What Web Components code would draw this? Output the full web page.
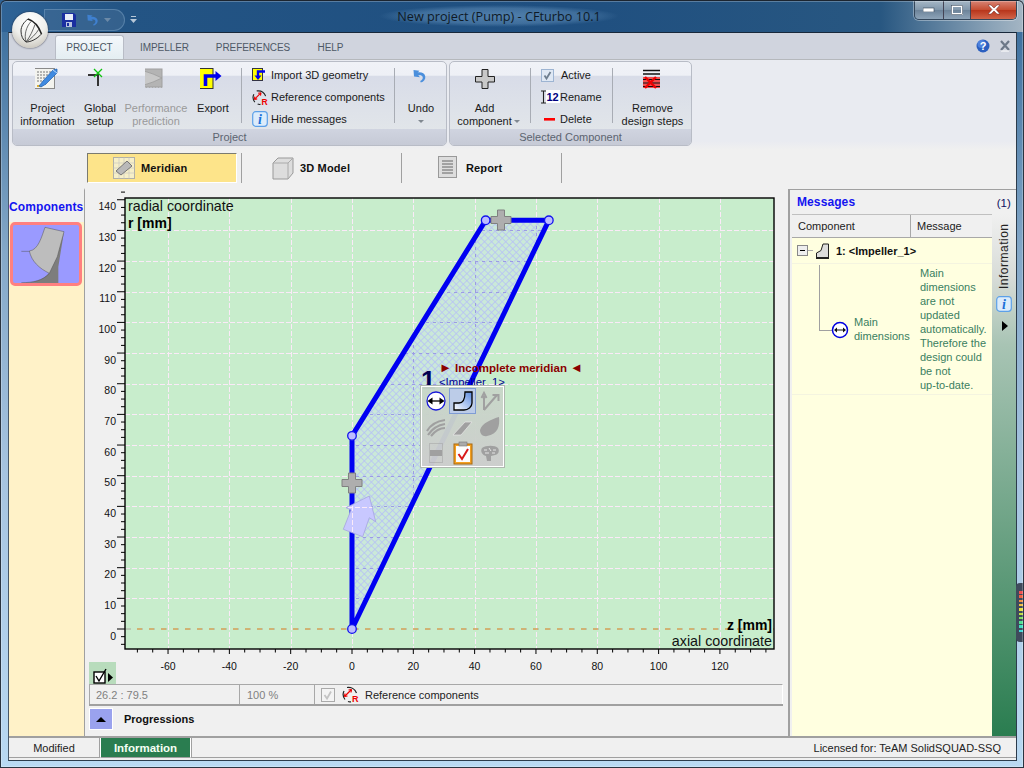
<!DOCTYPE html>
<html lang="en"><head><meta charset="utf-8"><title>CFturbo</title>
<style>
html,body{margin:0;padding:0;width:1024px;height:768px;overflow:hidden;background:#1f4f80;font:11px "Liberation Sans",Arial,sans-serif;color:#111}
</style></head><body>
<cf-app>
  <cf-titlebar slot="title" caption="New project (Pump) - CFturbo 10.1"></cf-titlebar>
  <cf-tabs slot="tabs"></cf-tabs>
  <cf-ribbon slot="ribbon">
    <cf-group label="Project" w="435">
      <cf-big w="69" icon="projinfo">Project<br>information</cf-big>
      <cf-big w="36" icon="globalsetup">Global<br>setup</cf-big>
      <cf-big w="76" icon="perf" disabled>Performance<br>prediction</cf-big>
      <cf-big w="38" icon="export">Export</cf-big>
      <cf-sep m="9"></cf-sep>
      <cf-smallcol w="132" m="10">
        <cf-small icon="import3d" gap="3">Import 3D geometry</cf-small>
        <cf-small icon="refcomp" gap="3">Reference components</cf-small>
        <cf-small icon="info" gap="3">Hide messages</cf-small>
      </cf-smallcol>
      <cf-sep m="10"></cf-sep>
      <cf-big w="52" icon="undo" caret="below">Undo</cf-big>
    </cf-group>
    <cf-group label="Selected Component" w="243">
      <cf-big w="69" icon="add" caret="inline">Add<br>component</cf-big>
      <cf-sep m="11"></cf-sep>
      <cf-smallcol w="60" m="10">
        <cf-small icon="active" gap="4">Active</cf-small>
        <cf-small icon="rename" gap="0" iconw="19">Rename</cf-small>
        <cf-small icon="del" gap="0" iconw="19">Delete</cf-small>
      </cf-smallcol>
      <cf-sep m="11"></cf-sep>
      <cf-big w="79" icon="remove">Remove<br>design steps</cf-big>
    </cf-group>
  </cf-ribbon>
  <cf-viewtabs slot="views">
    <cf-viewtab icon="vmeridian" pad="25" gap="6" active>Meridian</cf-viewtab>
    <cf-viewtab icon="vcube" pad="30" gap="6">3D Model</cf-viewtab>
    <cf-viewtab icon="vreport" pad="36" gap="8">Report</cf-viewtab>
  </cf-viewtabs>
  <cf-components slot="left"></cf-components>
  <cf-center slot="center">
    <cf-chart></cf-chart>
    <cf-infobar></cf-infobar>
    <cf-progress></cf-progress>
  </cf-center>
  <cf-messages slot="right"></cf-messages>
  <cf-status slot="status"></cf-status>
</cf-app>
<script>
const ICONS={
projinfo:`<svg width="26" height="24" viewBox="2 0 26 24"><rect x="1.500" y="1.500" width="20" height="20" fill="#f3f3ee" stroke="#8a8a8a"/><g stroke="#777" stroke-width="1" stroke-dasharray="2 1"><path d="M4 5h14M4 8h13M4 11h10M4 14h7M9 17h4"/></g><path d="M4 18h5v2H4z" fill="#e0b030"/><path d="M6 19 L10 14 L20 3 L24 2 L24 6 L13 17 L8 20z" fill="#3f8ae0" stroke="#1d5fb0" stroke-width=".7"/><path d="M20 3l4 3" stroke="#bcd8f8"/></svg>`,
globalsetup:`<svg width="24" height="22" viewBox="4 0 24 22"><path d="M2 8h12v11" fill="none" stroke="#333" stroke-width="2"/><path d="M10 2l8 8M18 2l-8 8" stroke="#0fc40f" stroke-width="1.300"/></svg>`,
perf:`<svg width="22" height="22" viewBox="3 0 22 22"><rect x="2" y="2" width="18" height="18" fill="#b4b4b4" stroke="#a0a0a0"/><path d="M2 4l9 3 9 4-9 4-9 3z" fill="#c8c8c8" stroke="#9a9a9a" stroke-width=".7"/><path d="M1 20.500h20" stroke="#aaa" stroke-dasharray="1 2"/><path d="M.5 2v18" stroke="#aaa" stroke-dasharray="1 2"/></svg>`,
export:`<svg width="26" height="23" viewBox="2.500 0 26 23"><rect x="1.500" y="1.500" width="14" height="20" fill="#ffff00" stroke="#333"/><path d="M8 19V9h11" fill="none" stroke="#0000ee" stroke-width="3.600"/><path d="M18 4l6 5-6 5z" fill="#0000ee"/></svg>`,
import3d:`<svg width="14" height="14" viewBox="0 0 14 14"><rect x=".5" y=".5" width="10" height="12" fill="#ffff00" stroke="#334"/><path d="M13 3.500H6V8" fill="none" stroke="#00e" stroke-width="2.400"/><path d="M2.500 7.500h7L6 12z" fill="#00e"/></svg>`,
refcomp:`<svg width="17" height="17" viewBox="0 0 17 17"><path d="M5 1.500C9 1 13 3 14.500 7M2 5C.5 8 1 11 3 13.500M6 15.500c1 .5 2 .5 3 .3" fill="none" stroke="#222" stroke-width="1.200"/><path d="M2.500 10.500L9.500 3.500" stroke="#e00" stroke-width="1.200"/><path d="M9.500 3.500l-3 .5M9.500 3.500l-.5 3M2.500 10.500l.5-3M2.500 10.500l3-.5" stroke="#e00" stroke-width="1.200"/><text x="10" y="16" font-family="Liberation Sans" font-size="9" font-weight="700" fill="#e00">R</text></svg>`,
info:`<svg width="16" height="16" viewBox="0 0 16 16"><rect x=".7" y=".7" width="14.600" height="14.600" rx="3" fill="#dcecfb" stroke="#5ca0e8" stroke-width="1.200"/><text x="8" y="13" text-anchor="middle" font-family="Liberation Serif" font-style="italic" font-weight="700" font-size="14" fill="#1a6fd8">i</text></svg>`,
undo:`<svg width="16" height="16" viewBox="1 -1 16 16"><path d="M1.500 2l6 .8-1.800 1.600c3.500-.6 7 .6 7.600 4 .4 3-1.500 5.200-4.500 6.100l-.6-1.400c2-.8 2.900-2.300 2.500-4-.4-1.600-2.400-2-4.400-1.600L8 9.200 2 8.500z" fill="#4b8fdc"/></svg>`,
add:`<svg width="22" height="22" viewBox="0 -1 22 22"><path d="M8 1.500h6v7h6.500v5.500H14v6.500H8V14H1.500V8.500H8z" fill="#c8c8c8" stroke="#222" stroke-width="1"/></svg>`,
active:`<svg width="13" height="13" viewBox="0 0 13 13"><rect x=".5" y=".5" width="12" height="12" fill="#dfe8f4" stroke="#9db4d2"/><path d="M3.500 6.500l2 3L9.500 3" fill="none" stroke="#6f7f90" stroke-width="1.800"/></svg>`,
rename:`<svg width="19" height="14" viewBox="0 0 19 14"><rect x="5" y="0" width="14" height="13" fill="#fff"/><path d="M0 1h5M0 13h5M2.500 1v12" stroke="#222" stroke-width="1.100" fill="none"/><text x="5.500" y="11" font-family="Liberation Sans" font-weight="700" font-size="11" fill="#000080">12</text></svg>`,
del:`<svg width="19" height="14" viewBox="0 0 19 14"><rect x="3" y="6" width="11" height="2.600" fill="#f00"/></svg>`,
remove:`<svg width="20" height="22" viewBox="2 -2 20 22"><path d="M1 1.500h18M1 5h18" stroke="#111" stroke-width="1.500"/><rect x="0" y="8" width="19" height="11" fill="#f25050"/><path d="M0 10.500h19M0 14h19M0 17.500h19" stroke="#111" stroke-width="1"/><path d="M4 8l11 11M15 8L4 19" stroke="#e00" stroke-width="2.400"/></svg>`,
vmeridian:`<svg width="22" height="26" viewBox="0 0 22 26"><rect x=".5" y="2.500" width="21" height="21" fill="#f6efc8" stroke="#b0b0a8"/><path d="M.5 8h21M.5 13h21M.5 18h21M6 2.500v21M11 2.500v21M16 2.500v21" stroke="#c8c8c0" stroke-width=".7"/><path d="M3 16L14 6l5 5-11 9z" fill="#b9b9b9" stroke="#777"/></svg>`,
vcube:`<svg width="22" height="24" viewBox="0 0 22 24"><path d="M1 7l5-5h15v15l-5 6H1z" fill="#ddd" stroke="#999"/><path d="M1 7h15v16M16 7l5-5" fill="none" stroke="#aaa"/></svg>`,
vreport:`<svg width="20" height="24" viewBox="0 0 20 24"><rect x=".5" y=".5" width="18" height="21" fill="#ddd" stroke="#999"/><path d="M4 5h11M4 8h11M4 11h11M4 14h11M4 17h11" stroke="#666"/></svg>`,
thumb:`<svg width="72" height="64" viewBox="30 96 216 192" style="display:block"><path d="M64 278c36 0 66-8 84-30L192 125l-17 105v50z" fill="#7d7d7d"/><path d="M135 112L192 125 172 200 148 250C118 235 95 215 88 183 115 180 125 140 135 112z" fill="#bdbdbd" stroke="#555" stroke-width="1.500"/><path d="M64 184H88M64 278c36 0 64-6 84-28" fill="none" stroke="#555" stroke-width="1.500"/></svg>`,
circ:`<svg width="18" height="18" viewBox="0 0 18 18"><circle cx="9" cy="9" r="7.500" fill="#fff" stroke="#0000e0" stroke-width="1.500"/><path d="M4 9h10" stroke="#111"/><path d="M3 9l3-2.500v5zM15 9l-3-2.500v5z" fill="#111"/></svg>`,
};
function icon(n){return ICONS[n]||''}
function def(name,css,html,init){customElements.define(name,class extends HTMLElement{
  constructor(){super();this.attachShadow({mode:'open'});}
  connectedCallback(){const a=n=>this.getAttribute(n);
    this.shadowRoot.innerHTML=`<style>${typeof css==='function'?css(a):css}</style>${typeof html==='function'?html(a):html}`;
    if(init)init(this.shadowRoot,a);}
});}

def('cf-app',`
:host{display:block;position:relative;width:1024px;height:768px;overflow:hidden;
 background:linear-gradient(90deg,#2f6396 0,#235484 12%,#1f4f80 55%,#285781 86%,#8ca4b8 97%,#a5b6c4 100%)}
.col{display:flex;flex-direction:column;height:768px;position:relative}
.frame{flex:1;min-height:0;display:flex;position:relative;
 background:linear-gradient(180deg,#3f719f 0,#84a8c8 30%,#a6c4e0 60%,#b9d9f2 100%);padding:0 7px 7px 8px}
.win{flex:1;display:flex;flex-direction:column;min-width:0;border:1px solid #2c3c4c;border-left-color:#485868;border-top-color:#18283a;background:#f0f0f0;box-sizing:border-box}
.main{flex:1;min-height:0;display:flex}
.edge{position:absolute;inset:0;border:1px solid #2a3440;border-top:1px solid #1c2530;border-radius:6px 6px 0 0;pointer-events:none;box-shadow:inset 0 0 0 1px rgba(255,255,255,.25)}
.gadget{position:absolute;right:0;top:583px;width:8px;height:59px;background:#3f4a5c;border-radius:4px 0 0 4px}
.gadget i{position:absolute;left:3px;right:0;height:2.500px}
`,()=>{
 const cols=['#f05050','#f06040','#f09040','#f0c040','#e8e040','#c0e040','#80e060','#50e090','#40e0c0','#40d8d8'];
 return `<div class="col"><slot name="title"></slot>
 <div class="frame"><div class="win"><slot name="tabs"></slot><slot name="ribbon"></slot><slot name="views"></slot>
 <div class="main"><slot name="left"></slot><slot name="center"></slot><slot name="right"></slot></div>
 <slot name="status"></slot></div></div></div>
 <div class="gadget">${cols.map((c,i)=>`<i style="top:${8+i*4.300}px;background:${c}"></i>`).join('')}</div><div class="edge"></div>`;
});

def('cf-titlebar',`
:host{display:block;height:32px;flex:none;position:relative}
.cap{position:absolute;left:0;right:0;top:8px;text-align:center;font:12.700px/16px "Open Sans","Noto Sans",sans-serif;color:#0f1a26;transform:translateX(-13px)}
.cap span{padding:2px 18px;background:radial-gradient(closest-side,rgba(130,175,215,.5),rgba(130,175,215,.32) 70%,rgba(130,175,215,0))}
.orb{position:absolute;left:12px;top:12px;width:36px;height:36px;border-radius:50%;z-index:5;box-shadow:0 0 2px #223;background:radial-gradient(circle at 50% 25%,#fff,#efefec 50%,#c6c2b8 90%,#aaa69c)}
.qat{position:absolute;left:44px;top:9px;width:81px;height:22px;border-radius:0 12px 12px 0;background:rgba(70,110,150,.5);box-shadow:inset 0 0 0 1px rgba(120,160,195,.5)}
.qat svg{position:absolute}
.btns{position:absolute;left:914px;top:0;width:103px;height:20px;display:flex;border:1px solid #33465a;border-top:0;border-radius:0 0 5px 5px;overflow:hidden;box-sizing:border-box;box-shadow:0 0 0 1px rgba(255,255,255,.35)}
.b{display:flex;align-items:center;justify-content:center;border-right:1px solid #445;background:linear-gradient(180deg,#a9bac8,#8298ac 50%,#6b8298 52%,#8ea4b8)}
.m{width:28px}.x{width:26px}.c{flex:1;border:0;background:linear-gradient(180deg,#d98a7c,#c74f34 50%,#b8361c 55%,#d2654a)}
`,a=>`<div class="qat">
 <svg style="left:18px;top:4px" width="14" height="14" viewBox="0 0 14 14"><path d="M0 0h12l2 2v12H0z" fill="#1a2fa0"/><rect x="3" y="1" width="8" height="6" fill="#e8eef8"/><rect x="4" y="9" width="6" height="5" fill="#b8c4e0"/><rect x="5" y="10" width="2" height="3" fill="#1a2fa0"/></svg>
 <svg style="left:42px;top:3px" width="14" height="16" viewBox="0 0 16 16"><path d="M1.500 2l6 .8-1.800 1.600c3.500-.6 7 .6 7.600 4 .4 3-1.500 5.200-4.500 6.100l-.6-1.400c2-.8 2.900-2.300 2.500-4-.4-1.600-2.400-2-4.400-1.600L8 9.200 2 8.500z" fill="#3f80d0"/></svg>
 <svg style="left:60px;top:9px" width="7" height="4" viewBox="0 0 7 4"><path d="M0 0h7L3.500 4z" fill="#6c8aa8"/></svg></div>
 <svg style="position:absolute;left:130px;top:16px" width="7" height="7" viewBox="0 0 7 7"><path d="M1 0h5v1H1zM0 3h7L3.500 7z" fill="#b8c8d8"/></svg>
 <div class="orb"><svg width="36" height="36" viewBox="0 0 36 36"><path d="M16 7C22 9 27 15 29.500 22" fill="none" stroke="#222" stroke-width="1.600"/><path d="M16 7C12 10 9 14 9 19 9 24 11 28 14 30 19 30 25 27 29.500 22" fill="none" stroke="#333" stroke-width="1"/><path d="M14 30C12 23 14 15 19 9.500M14 30C18 25 21 18 23 12.500M14 30C19 27 24 22 27 17" fill="none" stroke="#444" stroke-width=".8"/></svg></div>
 <div class="cap"><span>${a('caption')}</span></div>
 <div class="btns"><div class="b m"><svg width="12" height="5"><rect width="11" height="4" y="1" fill="#fff" stroke="#345" stroke-width=".6"/></svg></div><div class="b x"><svg width="12" height="10"><rect x="1" y="1" width="10" height="8" fill="none" stroke="#fff" stroke-width="2"/><rect x=".5" y=".5" width="11" height="9" fill="none" stroke="#345" stroke-width=".6"/></svg></div><div class="b c"><svg width="14" height="11" viewBox="0 0 14 11"><path d="M1 1h3l3 3 3-3h3L9 5.500l4 4.500h-3L7 7l-3 3H1l4-4.500z" fill="#fff" stroke="#622" stroke-width=".5"/></svg></div></div>`);

def('cf-tabs',`
:host{display:block;height:26px;flex:none;background:#d0d4de;box-sizing:border-box;position:relative}
.r{display:flex;height:26px;padding-left:46px;box-sizing:border-box;color:#4e5866;font-size:10px;letter-spacing:-.05px}
.t{display:flex;align-items:center;justify-content:center;height:24px;margin-top:2px}
.a{background:linear-gradient(180deg,#f4f7fb,#e4eef2);border:1px solid #b8bcc6;border-bottom:0;border-radius:3px 3px 0 0;width:67px;color:#4a5664;box-sizing:content-box;height:23px}
.s{position:absolute;right:0;top:0;height:26px}
`,`<div class="r"><div class="t a">PROJECT</div><div class="t" style="width:81px">IMPELLER</div><div class="t" style="width:96px">PREFERENCES</div><div class="t" style="width:59px">HELP</div></div>
<svg class="s" width="48" height="26" viewBox="0 0 48 26"><circle cx="15" cy="13" r="6.500" fill="#2a5fc0"/><circle cx="13.500" cy="11" r="4" fill="#5c90e8" opacity=".7"/><text x="15" y="17" text-anchor="middle" font-family="Liberation Sans" font-weight="700" font-size="11" fill="#fff">?</text><path d="M33 8l8 9M41 8l-8 9" stroke="#6d7888" stroke-width="2.200"/><path d="M33 18h8" stroke="#fff"/></svg>`);

def('cf-ribbon',`
:host{display:flex;height:91px;flex:none;box-sizing:border-box;padding:1px 0 4px 3px;gap:2px;border-top:1px solid #b5b8bc;background:linear-gradient(180deg,#e9ebf1 0,#e9ebf1 90%,#f0f0f0)}
`,`<slot></slot>`);

def('cf-group',a=>`
:host{display:flex;flex-direction:column;width:${a('w')}px;box-sizing:border-box;border:1px solid #b8bcc6;border-radius:5px;overflow:hidden;background:linear-gradient(180deg,#f0f2f7 0,#eef0f6 16%,#d8dce8 17%,#e4e8ea 100%)}
.b{flex:1;display:flex;min-height:0}
.l{height:16px;line-height:17px;text-align:center;color:#5c6470;background:linear-gradient(180deg,#d0d4e0,#c6cad6);font-size:11px;flex:none}
`,a=>`<div class="b"><slot></slot></div><div class="l">${a('label')}</div>`);

def('cf-big',a=>`
:host{display:flex;flex-direction:column;align-items:center;width:${a('w')}px;flex:none;line-height:13px;text-align:center;color:${a('disabled')!==null?'#9a9a9a':'#1a1a1a'};position:relative}
.i{height:40px;display:flex;align-items:flex-start;justify-content:center;padding-top:5px;box-sizing:border-box}
.t{white-space:nowrap;position:relative}
.c{position:absolute;left:100%;bottom:5px;width:0;height:0;border:3px solid transparent;border-top:3px solid #808890;border-bottom:0;margin-left:2px}
.cb{display:block;margin:5px auto 0;width:0;height:0;border:3px solid transparent;border-top:3px solid #808890;border-bottom:0}
`,a=>`<div class="i">${icon(a('icon'))}</div><div class="t"><slot></slot>${a('caret')==='inline'?'<span class="c"></span>':''}${a('caret')==='below'?'<span class="cb"></span>':''}</div>`);

def('cf-sep',a=>`:host{display:block;flex:none;width:1px;height:55px;margin:6px 0 0 ${a('m')}px;background:#a8acb4}`,``);
def('cf-smallcol',a=>`:host{display:flex;flex-direction:column;width:${a('w')}px;margin-left:${a('m')}px;flex:none;padding-top:2px;box-sizing:border-box}`,`<slot></slot>`);
def('cf-small',a=>`
:host{display:flex;align-items:center;height:22px;flex:none;white-space:nowrap;color:#1a1a1a}
.i{width:${a('iconw')||16}px;display:flex;align-items:center;margin-right:${a('gap')?a('gap'):3}px;flex:none}
`,a=>`<span class="i">${icon(a('icon'))}</span><slot></slot>`);

def('cf-viewtabs',`
:host{display:flex;height:38px;flex:none;padding-left:73px;background:#f0f0f0;box-sizing:border-box;padding-top:3px}
`,`<slot></slot>`);
def('cf-viewtab',a=>`
:host{display:flex;width:160px;height:30px;box-sizing:border-box;border-right:1px solid #a0a0a0;padding-right:4px;font-weight:700;font-size:11px;color:#111;letter-spacing:.15px}
.x{flex:1;display:flex;align-items:center;padding-left:${a('pad')}px;box-sizing:border-box;margin-left:${a('active')!==null?5:0}px;${a('active')!==null?'background:#fde48a;border:1px solid #7a7a70;border-right-color:#fff;border-bottom-color:#fff;':''}}
.i{display:flex;margin-right:${a('gap')}px}
`,a=>`<div class="x"><span class="i">${icon(a('icon'))}</span><slot></slot></div>`);

def('cf-components',`
:host{display:flex;flex-direction:column;width:76px;flex:none;border-right:1px solid #a0a0a0;box-sizing:border-box;background:#fff2c8;border-top:2px solid #f0f0f0}
.h{height:32px;background:#f0f0f0;color:#1414f0;font-weight:700;line-height:35px;text-align:center;font-size:12px;padding-right:3px;box-sizing:border-box;letter-spacing:.1px}
.t{width:72px;height:64px;margin:0 0 0 1px;background:#9a9aff;border:3px solid #ff8080;border-radius:5px;box-sizing:border-box;overflow:hidden}
.t svg{margin:-3px}
.pad{flex:1}
`,()=>`<div class="h">Components</div><div class="t">${icon('thumb')}</div><div class="pad"></div>`);

def('cf-center',`:host{display:block;width:703px;flex:none;background:#f0f0f0;box-sizing:border-box}`,`<slot></slot>`);

def('cf-chart',`
:host{display:block;position:relative;height:496px;width:703px}
svg{position:absolute;left:0;top:0;font-family:"Liberation Sans",sans-serif}
`,()=>{
 const X=z=>267+3.066*z, Y=r=>441-3.066*r; // host offset 85,188
 const L=40,T=10,R=689,B=461;
 const sn=v=>Math.round(v)+.5;
 let g='',gi='',t='';
 const grid='stroke="#fbeaf8" stroke-dasharray="5 2" stroke-width="1"';
 const gridIn='stroke="#9c9ce4" stroke-dasharray="3 4" stroke-width="1"';
 for(let z=-60;z<=120;z+=20){const x=sn(X(z));
   g+=`<line x1="${x}" x2="${x}" y1="${T}" y2="${B}" ${grid}/>`;
   gi+=`<line x1="${x}" x2="${x}" y1="${T}" y2="${B}" ${gridIn}/>`;
   t+=`<text x="${X(z)}" y="${482}" text-anchor="middle">${z}</text>`;}
 for(let r=10;r<=130;r+=10){const y=sn(Y(r));
   g+=`<line x1="${L}" x2="${R}" y1="${y}" y2="${y}" ${grid}/>`;
   gi+=`<line x1="${L}" x2="${R}" y1="${y}" y2="${y}" ${gridIn}/>`;}
 for(let r=0;r<=140;r+=10){t+=`<text x="31" y="${Y(r)+10.500}" text-anchor="end">${r}</text>`;}
 let ticks='';
 for(let z=-70;z<=135;z+=5){const x=X(z);const maj=z%20===0;ticks+=`M${x} ${B}v${maj?5:3.500}`;}
 for(let r=-5;r<=142.5;r+=2.5){const y=Y(r);const maj=r%10===0;ticks+=`M${L} ${y}h-${maj?8:4}`;}
 const P=[[0,0],[0,63],[43.6,133.3],[64.2,133.3]];
 const shape=P.map(p=>`${X(p[0])},${Y(p[1])}`).join(' ');
 const plus=(x,y)=>`<path transform="translate(${x} ${y})" d="M-3.500-10h7v6.500h6.500v7h-6.500v6.500h-7v-6.500h-6.500v-7h6.500z" fill="#aeaeae" stroke="#808080"/>`;
 const pt=(x,y)=>`<circle cx="${x}" cy="${y}" r="4.300" fill="#bcbcff" stroke="#1212ee" stroke-width="1.300"/>`;
 return `<svg width="703" height="496" viewBox="0 0 703 496">
 <defs><pattern id="h" width="5" height="5" patternUnits="userSpaceOnUse" patternTransform="rotate(45)"><rect width="5" height="5" fill="#cae9d8"/><path d="M0 0h5M0 0v5" stroke="#b6c0f6" stroke-width="1.500"/></pattern>
 <clipPath id="cs"><polygon points="${shape}"/></clipPath></defs>
 <rect x="${L}" y="${T}" width="${R-L}" height="${B-T}" fill="#c8edcc"/>
 ${g}
 <polygon points="${shape}" fill="url(#h)"/>
 <g clip-path="url(#cs)">${gi}</g>
 <line x1="${L}" x2="${R}" y1="${Y(0)}" y2="${Y(0)}" stroke="#a8a8a0" stroke-dasharray="6 6"/>
 <line x1="${L+6}" x2="${R}" y1="${Y(0)}" y2="${Y(0)}" stroke="#e89a30" stroke-dasharray="5 7" stroke-dashoffset="-6"/>
 <polygon points="${shape}" fill="none" stroke="#0000f2" stroke-width="5" stroke-linejoin="round"/>
 ${P.map(p=>pt(X(p[0]),Y(p[1]))).join('')}
 ${plus(416,32)}${plus(267,295)}
 <path d="M284.300 308L261 319.700 266 322 258.300 341.300 277.700 348.700 284.300 329.700 290.700 333.700z" fill="#c8c8ff" stroke="#a4a4e0" stroke-width=".8"/>
 <path d="M263 319.500H287M267.500 318V346" ${grid}/>
 <rect x="${L}" y="${T}" width="${R-L}" height="${B-T}" fill="none" stroke="#000" stroke-width="1.400"/>
 <path d="${ticks}" stroke="#000" stroke-width="1"/>
 <g font-size="10.500" fill="#111">${t}</g>
 <text x="43" y="23" font-size="14.300" fill="#111">radial coordinate</text>
 <text x="43" y="40" font-size="14" font-weight="700" fill="#000">r [mm]</text>
 <text x="687" y="442" font-size="14" font-weight="700" fill="#000" text-anchor="end">z [mm]</text>
 <text x="687" y="458" font-size="14.300" fill="#111" text-anchor="end">axial coordinate</text>
 <text x="336" y="201" font-size="26" font-weight="700" fill="#000050">1</text>
 <text x="354" y="184" font-size="11.500" font-weight="700" fill="#8b0000"><tspan font-size="13">►</tspan> Incomplete meridian <tspan font-size="13">◄</tspan></text>
 <text x="354" y="198" font-size="11.300" fill="#000090">&lt;Impeller_1&gt;</text>
 <rect x="4" y="474" width="27" height="22" fill="#b8dcbc"/>
 <rect x="9" y="484" width="11" height="11" fill="#fff" stroke="#000" stroke-width="1.400"/><path d="M11 488l3 5 7-12" fill="none" stroke="#000" stroke-width="1.400"/><path d="M23 485l5 4.500-5 4.500z" fill="#000"/>
 </svg><cf-popup style="position:absolute;left:336px;top:198px"></cf-popup>`;
});

def('cf-popup',`
:host{display:grid;grid-template-columns:repeat(3,27px);grid-template-rows:repeat(3,26px);width:83px;height:81px;box-sizing:border-box;border:1px solid #fff;outline:1px solid #b0b8b0;padding:1px 0 0 0;background:linear-gradient(180deg,rgba(200,215,200,.96),rgba(205,205,205,.97))}
div{display:flex;align-items:center;justify-content:center}
.a{background:#bccce8;outline:1px solid #7f9cd4;outline-offset:-1px}
`,()=>{const g='#a0a0a0';return `
<div><svg width="22" height="22" viewBox="0 0 22 22"><circle cx="11" cy="11" r="9" fill="#fff" stroke="#1818d8" stroke-width="1.300"/><path d="M5 11h12" stroke="#000" stroke-width="1.300"/><path d="M2.500 11l5-3.500v7zM19.500 11l-5-3.500v7z" fill="#000"/></svg></div>
<div class="a"><svg width="22" height="22" viewBox="0 0 22 22"><defs><linearGradient id="bl" x1="0" y1="1" x2="1" y2="0"><stop offset="0" stop-color="#fff"/><stop offset="1" stop-color="#5a8ae0"/></linearGradient></defs><path d="M2 20V13H7C11 13 13 9 13 2H20V13C20 17 16 20 12 20z" fill="url(#bl)" stroke="#000" stroke-width="1.300"/></svg></div>
<div><svg width="22" height="22" viewBox="0 0 22 22"><path d="M5 20V6M2.500 8L5 3l2.500 5M5 20L18 5M13.500 5h6v6" fill="none" stroke="${g}" stroke-width="2"/></svg></div>
<div><svg width="22" height="22" viewBox="0 0 22 22"><path d="M2 15C6 8 13 5 20 4M3 19C7 13 13 9 20 8M6 20c4-5 9-8 14-8" fill="none" stroke="${g}" stroke-width="2.200"/></svg></div>
<div><svg width="22" height="22" viewBox="0 0 22 22"><path d="M1 19L13 6h7L9 19z" fill="${g}" stroke="#e8e8e8" stroke-width=".7"/></svg></div>
<div><svg width="22" height="22" viewBox="0 0 22 22"><path d="M1 14C3 7 13 3 20 1 21 10 19 18 8 20 4 21 1 18 1 14z" fill="${g}"/></svg></div>
<div><svg width="22" height="22" viewBox="0 0 22 22"><rect x="4.500" y="1.500" width="13" height="19" fill="none" stroke="${g}" stroke-dasharray="1 1"/><rect x="5" y="8" width="12" height="6" fill="${g}"/></svg></div>
<div><svg width="22" height="24" viewBox="0 0 22 24"><rect x="2" y="3" width="18" height="20" fill="#f4a020" stroke="#a86810"/><rect x="4" y="5" width="14" height="16" fill="#fdfdfd"/><rect x="7" y="1" width="8" height="4" fill="#aaa" stroke="#777" stroke-width=".6"/><path d="M6.500 13l3.500 5 6-10" fill="none" stroke="#d81818" stroke-width="2"/></svg></div>
<div><svg width="22" height="22" viewBox="0 0 22 22"><path d="M3 6c4-3 13-3 16 0 2 3 0 7-3 7l-4 1v5H8l-1-5C3 13 1 9 3 6z" fill="${g}"/><path d="M5 8h3M10 6l2 3M14 8h3M6 11h4M13 11h3" stroke="#e4e4e4"/></svg></div>`});

def('cf-infobar',`
:host{display:flex;height:22px;margin:0 5px 0 4px;box-sizing:border-box;border-bottom:2px solid #a0a0a0;color:#808080;font-size:11px;width:694px}
.c{border:1px solid #a8a8a8;border-right:0;border-bottom:0;display:flex;align-items:center;box-sizing:border-box;height:20px}
.b{width:150px;padding-left:6px}.m{width:75px;padding-left:7px}
.r{flex:1;color:#222;padding-left:6px;border-right:1px solid #fff}
.k{width:12px;height:12px;border:1px solid #aaa;background:#f4f4f4;margin-right:7px;display:flex;box-sizing:content-box}
.i{margin-right:6px;display:flex}
`,()=>`<div class="c b">26.2 : 79.5</div><div class="c m">100 %</div><div class="c r"><span class="k"><svg width="12" height="12" viewBox="0 0 12 12"><path d="M2.500 6l2.500 3.500L9 2.500" fill="none" stroke="#c4c4c4" stroke-width="1.800"/></svg></span><span class="i">${icon('refcomp')}</span>Reference components</div>`);

def('cf-progress',`
:host{display:flex;align-items:center;height:30px;padding:0 0 4px 4px;font-weight:700;color:#111;font-size:11px;box-sizing:border-box}
.q{width:24px;height:22px;background:#9aa2ee;display:flex;align-items:center;justify-content:center;margin-right:11px;border:1px solid #fff;box-sizing:border-box}
.q i{width:0;height:0;border:5px solid transparent;border-bottom:5px solid #000;border-top:0}
`,`<span class="q"><i></i></span>Progressions`);

def('cf-messages',`
:host{display:flex;flex-direction:column;flex:1;min-width:0;box-sizing:border-box;border-left:2px solid #a0a0a0;border-top:1px solid #a0a0a0;margin-top:1px;background:#f0f0f0;padding-left:2px;position:relative}
.top{height:24px;flex:none;display:flex;justify-content:space-between;color:#1414f0;font-weight:700;padding:5px 5px 0 5px;box-sizing:border-box;font-size:12px;letter-spacing:.1px}
.n{color:#101060;font-weight:400;margin-top:2px;font-size:11.500px}
.body{flex:1;min-height:0;display:flex}
.l{width:200px;flex:none;background:#ffffe0;display:flex;flex-direction:column}
.hd{height:24px;flex:none;display:flex;background:#f0f0f0;border-top:1px solid #c0c0c0;border-bottom:1px solid #a8a8a8;box-sizing:border-box;color:#222;line-height:22px}
.hd span:first-child{width:119px;padding-left:6px;border-right:1px solid #a8a8a8;box-sizing:border-box}
.hd span:last-child{padding-left:6px}
.tr{height:26px;flex:none;display:flex;align-items:center;border-bottom:1px solid #f4f4e0;box-sizing:border-box;font-weight:700;position:relative;padding-left:5px}
.minus{width:9px;height:9px;border:1px solid #888;background:#eee;display:flex;align-items:center;justify-content:center;box-sizing:content-box}
.minus:after{content:"";width:5px;height:1px;background:#000}
.dash{width:5px;border-top:1px solid #aaa;margin-right:3px}
.row{height:131px;flex:none;display:flex;border-bottom:1px solid #f4f4e0;box-sizing:border-box;position:relative;color:#3a8060;line-height:14px}
.msg{position:absolute;left:128px;top:2px;width:70px;white-space:nowrap}
.nm{position:absolute;left:62px;top:51px}
.ln{position:absolute;left:27px;top:1px;height:65px;width:13px;border-left:1px solid #a0a0a0;border-bottom:1px solid #a0a0a0;box-sizing:content-box}
.ci{position:absolute;left:39px;top:57px;display:flex}
.s{flex:1;background:linear-gradient(180deg,#f0f0f0 0,#d8dcd8 12%,#a8c4b4 25%,#2a7d50 100%);position:relative;display:flex;flex-direction:column;align-items:center}
.v{writing-mode:vertical-rl;transform:rotate(180deg);color:#222;margin-top:9px;letter-spacing:.5px;font-size:12px;height:66px;text-align:left}
.s svg{margin-top:7px}
.ar{width:0;height:0;border:5px solid transparent;border-left:6px solid #000;border-right:0;margin-top:9px;margin-left:1px}
`,()=>`<div class="top"><span>Messages</span><span class="n">(1)</span></div>
<div class="body"><div class="l"><div class="hd"><span>Component</span><span>Message</span></div>
<div class="tr"><span class="minus"></span><span class="dash"></span><svg width="13" height="16" viewBox="0 0 13 16" style="margin-right:7px"><path d="M.5 14.500V10L5 7.500 7 1h5.500v13.500z" fill="#ddd" stroke="#222" stroke-width="1"/><path d="M0 15h13" stroke="#222" stroke-width="2"/></svg>1: &lt;Impeller_1&gt;</div>
<div class="row"><span class="ln"></span><span class="ci">${icon('circ')}</span><span class="nm">Main<br>dimensions</span><span class="msg">Main<br>dimensions<br>are not<br>updated<br>automatically.<br>Therefore the<br>design could<br>be not<br>up-to-date.</span></div>
</div>
<div class="s"><span class="v">Information</span>${icon('info')}<span class="ar"></span></div></div>`);

def('cf-status',`
:host{display:flex;height:24px;flex:none;border-top:2px solid #a0a0a0;box-sizing:border-box;background:#f0f0f0;color:#222;position:relative;padding-bottom:2px}
.c{width:91px;display:flex;align-items:center;justify-content:center;box-sizing:border-box;border-right:1px solid #a0a0a0;border-bottom:1px solid #a0a0a0}
.g{background:#2a7d50;color:#f4fff4;font-weight:700;border-left:1px solid #fff;border-right:1px solid #fff;width:91px;font-size:11.500px}
.e{flex:1;display:flex;align-items:center;justify-content:flex-end;padding-right:15px;border-left:1px solid #a0a0a0;border-bottom:1px solid #a0a0a0;color:#222}
`,`<div class="c">Modified</div><div class="c g">Information</div><div class="e">Licensed for: TeAM SolidSQUAD-SSQ</div>`);
</script>
</body></html>
